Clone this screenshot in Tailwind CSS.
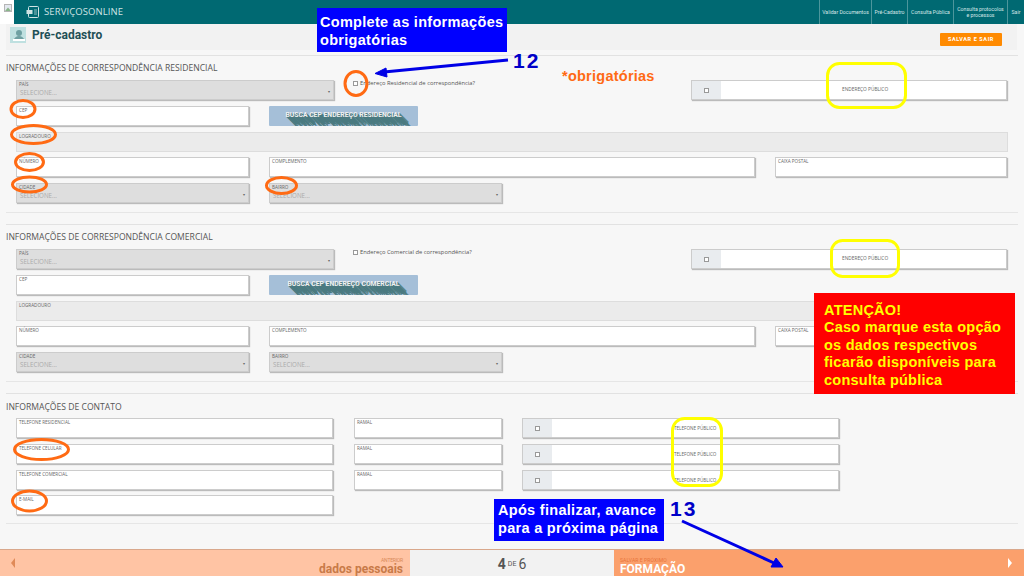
<!DOCTYPE html>
<html lang="pt">
<head>
<meta charset="utf-8">
<script src="https://cdn.jsdelivr.net/npm/@tailwindcss/browser@4"></script>
</head>
<body class="m-0">
<div class="relative w-[1024px] h-[576px] overflow-hidden bg-[#f7f7f7] font-['Open_Sans',sans-serif] text-[#555]">

  <!-- header -->
  <header class="flex h-[24px] bg-[#006972] text-[#cfe3e4]">
    <div class="w-[14px] bg-white flex items-start pt-[4px] pl-[4px]">
      <svg width="8" height="8" viewBox="0 0 8 8"><rect x="0.5" y="0.5" width="7" height="7" fill="#e4e8f0" stroke="#b5b5b5"/><path d="M1 7 L4 3.5 L7 7Z" fill="#8ab58a"/></svg>
    </div>
    <div class="flex items-center gap-[5px] pl-[12px] flex-1">
      <svg width="13" height="12" viewBox="0 0 13 12" fill="none" stroke="#cfe3e4" stroke-width="1"><rect x="2.5" y="0.5" width="10" height="11" rx="1"/><rect x="0.5" y="4" width="6" height="4" fill="#cfe3e4" stroke="none"/><path d="M8 4h3M8 6h3M8 8h3" stroke-width="0.7"/></svg>
      <span class="text-[9.5px] tracking-[0.1px]">SERVIÇOSONLINE</span>
    </div>
    <nav class="flex text-[5.2px] text-center leading-[6px] font-['Roboto',sans-serif] text-[#d4e6e7]">
      <a class="w-[52px] flex items-center justify-center border-l border-[#4d969c]">Validar Documentos</a>
      <a class="w-[36px] flex items-center justify-center border-l border-[#4d969c]">Pré-Cadastro</a>
      <a class="w-[46px] flex items-center justify-center border-l border-[#4d969c]">Consulta Pública</a>
      <a class="w-[54px] flex items-center justify-center border-l border-[#4d969c]">Consulta protocolos<br>e processos</a>
      <a class="w-[17px] flex items-center justify-center border-l border-[#4d969c]">Sair</a>
    </nav>
  </header>

  <!-- title band -->
  <div class="flex items-center justify-between w-[1011px] h-[26px] ml-[6px] pl-[4px] pr-[15px] bg-[#f2f2f2]">
    <div class="flex items-center gap-[6px] -mt-[4px]">
      <svg width="16" height="16" viewBox="0 0 16 16"><rect width="16" height="16" fill="#bfe0e0"/><circle cx="9" cy="6" r="3" fill="#6fa0a2"/><path d="M3 14 Q5 9 9 9 Q13 9 15 14Z" fill="#6fa0a2"/><rect x="3" y="12" width="12" height="2" fill="#fff"/></svg>
      <h1 class="text-[12px] font-bold text-[#1f4f56] font-['Roboto',sans-serif]">Pré-cadastro</h1>
    </div>
    <button class="w-[62px] h-[13px] mt-[4px] rounded-[1px] bg-[#ff8a00] text-white text-[5.5px] font-bold tracking-[0.6px] font-['Roboto',sans-serif]">SALVAR E SAIR</button>
  </div>

  <div class="h-[1px] bg-[#e2e2e2] mt-[5px] ml-[6px] mr-[6px]"></div>

  <!-- residencial -->
  <section class="pl-[16px] pr-[16px]">
    <h2 class="-ml-[10px] mt-[6px] h-[12px] text-[8.6px] leading-[12px] text-[#555]">INFORMAÇÕES DE CORRESPONDÊNCIA RESIDENCIAL</h2>

    <div class="flex mt-[6px] h-[20px]">
      <div class="relative w-[318px] bg-[#dedede] border border-[#ccc] shadow-[1px_1px_1px_#bbb] px-[2px]"><p class="text-[4.6px] leading-[6px] text-[#666]">PAÍS</p><p class="text-[6.2px] leading-[8px] mt-[2px] pl-[1px] text-[#aaa]">SELECIONE...</p><span class="absolute right-[3px] top-[8px] text-[4px] text-[#666]">▾</span></div>
      <label class="flex items-start gap-[2px] ml-[19px] w-[338px] text-[5.8px] leading-[7px] text-[#555]"><span class="block w-[5px] h-[5px] mt-[1px] bg-white border border-[#999]"></span>Endereço Residencial de correspondência?</label>
      <div class="relative flex w-[316px] bg-white border border-[#ccc] shadow-[1px_1px_1px_#bbb]"><div class="w-[29px] bg-[#e9ecef] flex items-center justify-center"><span class="block w-[5px] h-[5px] bg-white border border-[#999]"></span></div><span class="pl-[121px] self-center text-[4.8px] text-[#666]">ENDEREÇO PÚBLICO</span></div>
    </div>

    <div class="flex mt-[6px] h-[20px] gap-[20px]">
      <div class="w-[233px] bg-white border border-[#ccc] shadow-[1px_1px_1px_#bbb] px-[2px] text-[4.6px] leading-[6px] text-[#666]">CEP</div>
      <button class="w-[149px] overflow-hidden rounded-[1px] bg-[#a5bfd8] text-[#f0f0f0] text-[6.8px] leading-[18px] pb-[2px] font-bold [text-shadow:1px_1px_0_#4a7a80,2px_2px_0_#4a7a80,3px_3px_0_#4a7a80,4px_4px_0_#4a7a80,5px_5px_0_#4a7a80,6px_6px_0_#4a7a80,7px_7px_0_#4a7a80,8px_8px_0_#4a7a80,9px_9px_0_#4a7a80] font-['Roboto',sans-serif]">BUSCA CEP ENDEREÇO RESIDENCIAL</button>
    </div>

    <div class="mt-[6px] h-[20px] w-[992px] bg-[#ebebeb] border border-[#ddd] px-[2px] text-[4.6px] leading-[6px] text-[#666]">LOGRADOURO</div>

    <div class="flex mt-[5px] h-[20px] gap-[20px]">
      <div class="w-[233px] bg-white border border-[#ccc] shadow-[1px_1px_1px_#bbb] px-[2px] text-[4.6px] leading-[6px] text-[#666]">NÚMERO</div>
      <div class="w-[486px] bg-white border border-[#ccc] shadow-[1px_1px_1px_#bbb] px-[2px] text-[4.6px] leading-[6px] text-[#666]">COMPLEMENTO</div>
      <div class="w-[232px] bg-white border border-[#ccc] shadow-[1px_1px_1px_#bbb] px-[2px] text-[4.6px] leading-[6px] text-[#666]">CAIXA POSTAL</div>
    </div>

    <div class="flex mt-[6px] h-[20px] gap-[20px]">
      <div class="relative w-[233px] bg-[#dedede] border border-[#ccc] shadow-[1px_1px_1px_#bbb] px-[2px]"><p class="text-[4.6px] leading-[6px] text-[#666]">CIDADE</p><p class="text-[6.2px] leading-[8px] mt-[2px] pl-[1px] text-[#aaa]">SELECIONE...</p><span class="absolute right-[3px] top-[8px] text-[4px] text-[#666]">▾</span></div>
      <div class="relative w-[233px] bg-[#dedede] border border-[#ccc] shadow-[1px_1px_1px_#bbb] px-[2px]"><p class="text-[4.6px] leading-[6px] text-[#666]">BAIRRO</p><p class="text-[6.2px] leading-[8px] mt-[2px] pl-[1px] text-[#aaa]">SELECIONE...</p><span class="absolute right-[3px] top-[8px] text-[4px] text-[#666]">▾</span></div>
    </div>
  </section>

  <div class="h-[1px] bg-[#e6e6e6] mt-[9px] mx-[6px]"></div>
  <div class="h-[1px] bg-[#e2e2e2] mt-[11px] mx-[6px]"></div>

  <!-- comercial -->
  <section class="pl-[16px] pr-[16px]">
    <h2 class="-ml-[10px] mt-[6px] h-[12px] text-[8.6px] leading-[12px] text-[#555]">INFORMAÇÕES DE CORRESPONDÊNCIA COMERCIAL</h2>

    <div class="flex mt-[6px] h-[20px]">
      <div class="relative w-[318px] bg-[#dedede] border border-[#ccc] shadow-[1px_1px_1px_#bbb] px-[2px]"><p class="text-[4.6px] leading-[6px] text-[#666]">PAÍS</p><p class="text-[6.2px] leading-[8px] mt-[2px] pl-[1px] text-[#aaa]">SELECIONE...</p><span class="absolute right-[3px] top-[8px] text-[4px] text-[#666]">▾</span></div>
      <label class="flex items-start gap-[2px] ml-[19px] w-[338px] text-[5.8px] leading-[7px] text-[#555]"><span class="block w-[5px] h-[5px] mt-[1px] bg-white border border-[#999]"></span>Endereço Comercial de correspondência?</label>
      <div class="relative flex w-[316px] bg-white border border-[#ccc] shadow-[1px_1px_1px_#bbb]"><div class="w-[29px] bg-[#e9ecef] flex items-center justify-center"><span class="block w-[5px] h-[5px] bg-white border border-[#999]"></span></div><span class="pl-[121px] self-center text-[4.8px] text-[#666]">ENDEREÇO PÚBLICO</span></div>
    </div>

    <div class="flex mt-[6px] h-[20px] gap-[20px]">
      <div class="w-[233px] bg-white border border-[#ccc] shadow-[1px_1px_1px_#bbb] px-[2px] text-[4.6px] leading-[6px] text-[#666]">CEP</div>
      <button class="w-[149px] overflow-hidden rounded-[1px] bg-[#a5bfd8] text-[#f0f0f0] text-[6.8px] leading-[18px] pb-[2px] font-bold [text-shadow:1px_1px_0_#4a7a80,2px_2px_0_#4a7a80,3px_3px_0_#4a7a80,4px_4px_0_#4a7a80,5px_5px_0_#4a7a80,6px_6px_0_#4a7a80,7px_7px_0_#4a7a80,8px_8px_0_#4a7a80,9px_9px_0_#4a7a80] font-['Roboto',sans-serif]">BUSCA CEP ENDEREÇO COMERCIAL</button>
    </div>

    <div class="mt-[6px] h-[20px] w-[992px] bg-[#ebebeb] border border-[#ddd] px-[2px] text-[4.6px] leading-[6px] text-[#666]">LOGRADOURO</div>

    <div class="flex mt-[5px] h-[20px] gap-[20px]">
      <div class="w-[233px] bg-white border border-[#ccc] shadow-[1px_1px_1px_#bbb] px-[2px] text-[4.6px] leading-[6px] text-[#666]">NÚMERO</div>
      <div class="w-[486px] bg-white border border-[#ccc] shadow-[1px_1px_1px_#bbb] px-[2px] text-[4.6px] leading-[6px] text-[#666]">COMPLEMENTO</div>
      <div class="w-[232px] bg-white border border-[#ccc] shadow-[1px_1px_1px_#bbb] px-[2px] text-[4.6px] leading-[6px] text-[#666]">CAIXA POSTAL</div>
    </div>

    <div class="flex mt-[6px] h-[20px] gap-[20px]">
      <div class="relative w-[233px] bg-[#dedede] border border-[#ccc] shadow-[1px_1px_1px_#bbb] px-[2px]"><p class="text-[4.6px] leading-[6px] text-[#666]">CIDADE</p><p class="text-[6.2px] leading-[8px] mt-[2px] pl-[1px] text-[#aaa]">SELECIONE...</p><span class="absolute right-[3px] top-[8px] text-[4px] text-[#666]">▾</span></div>
      <div class="relative w-[233px] bg-[#dedede] border border-[#ccc] shadow-[1px_1px_1px_#bbb] px-[2px]"><p class="text-[4.6px] leading-[6px] text-[#666]">BAIRRO</p><p class="text-[6.2px] leading-[8px] mt-[2px] pl-[1px] text-[#aaa]">SELECIONE...</p><span class="absolute right-[3px] top-[8px] text-[4px] text-[#666]">▾</span></div>
    </div>
  </section>

  <div class="h-[1px] bg-[#e6e6e6] mt-[9px] mx-[6px]"></div>
  <div class="h-[1px] bg-[#e2e2e2] mt-[11px] mx-[6px]"></div>

  <!-- contato -->
  <section class="pl-[16px]">
    <h2 class="-ml-[10px] mt-[7px] h-[12px] text-[8.6px] leading-[12px] text-[#555]">INFORMAÇÕES DE CONTATO</h2>

    <div class="flex mt-[5px] h-[20px]">
      <div class="w-[317px] bg-white border border-[#ccc] shadow-[1px_1px_1px_#bbb] px-[2px] text-[4.6px] leading-[6px] text-[#666]">TELEFONE RESIDENCIAL</div>
      <div class="ml-[21px] w-[148px] bg-white border border-[#ccc] shadow-[1px_1px_1px_#bbb] px-[2px] text-[4.6px] leading-[6px] text-[#666]">RAMAL</div>
      <div class="flex ml-[20px] w-[317px] bg-white border border-[#ccc] shadow-[1px_1px_1px_#bbb]"><div class="w-[29px] bg-[#e9ecef] flex items-center justify-center"><span class="block w-[5px] h-[5px] bg-white border border-[#999]"></span></div><span class="pl-[122px] self-center text-[4.6px] text-[#666]">TELEFONE PÚBLICO</span></div>
    </div>
    <div class="flex mt-[6px] h-[20px]">
      <div class="w-[317px] bg-white border border-[#ccc] shadow-[1px_1px_1px_#bbb] px-[2px] text-[4.6px] leading-[6px] text-[#666]">TELEFONE CELULAR</div>
      <div class="ml-[21px] w-[148px] bg-white border border-[#ccc] shadow-[1px_1px_1px_#bbb] px-[2px] text-[4.6px] leading-[6px] text-[#666]">RAMAL</div>
      <div class="flex ml-[20px] w-[317px] bg-white border border-[#ccc] shadow-[1px_1px_1px_#bbb]"><div class="w-[29px] bg-[#e9ecef] flex items-center justify-center"><span class="block w-[5px] h-[5px] bg-white border border-[#999]"></span></div><span class="pl-[122px] self-center text-[4.6px] text-[#666]">TELEFONE PÚBLICO</span></div>
    </div>
    <div class="flex mt-[6px] h-[20px]">
      <div class="w-[317px] bg-white border border-[#ccc] shadow-[1px_1px_1px_#bbb] px-[2px] text-[4.6px] leading-[6px] text-[#666]">TELEFONE COMERCIAL</div>
      <div class="ml-[21px] w-[148px] bg-white border border-[#ccc] shadow-[1px_1px_1px_#bbb] px-[2px] text-[4.6px] leading-[6px] text-[#666]">RAMAL</div>
      <div class="flex ml-[20px] w-[317px] bg-white border border-[#ccc] shadow-[1px_1px_1px_#bbb]"><div class="w-[29px] bg-[#e9ecef] flex items-center justify-center"><span class="block w-[5px] h-[5px] bg-white border border-[#999]"></span></div><span class="pl-[122px] self-center text-[4.6px] text-[#666]">TELEFONE PÚBLICO</span></div>
    </div>
    <div class="mt-[5px] h-[20px] w-[317px] bg-white border border-[#ccc] shadow-[1px_1px_1px_#bbb] px-[2px] text-[4.6px] leading-[6px] text-[#666]">E-MAIL</div>
  </section>

  <div class="h-[1px] bg-[#e6e6e6] mt-[8px] mx-[6px]"></div>

  <!-- footer -->
  <footer class="absolute left-0 right-0 bottom-0 h-[27px] flex border-t border-[#d9a88c] font-['Roboto',sans-serif]">
    <div class="w-[410px] bg-[#ffc4a4] flex items-center justify-between pl-[11px] pr-[7px]">
      <span class="w-0 h-0 border-y-[5px] border-y-transparent border-r-[4px] border-r-[#e08a58]"></span>
      <div class="text-right pt-[5px]"><p class="text-[5px] leading-[6px] tracking-[-0.2px] text-[#d98a5a]">ANTERIOR</p><p class="text-[12px] leading-[12px] font-bold text-[#c87a48]">dados pessoais</p></div>
    </div>
    <div class="w-[204px] bg-[#f2f2f2] flex items-center justify-center gap-[2px] text-[#555] pt-[3px]"><b class="text-[14px]">4</b><span class="text-[7px]">DE</span><b class="text-[14px] font-normal">6</b></div>
    <div class="flex-1 bg-[#fba06c] flex items-center justify-between pl-[6px] pr-[12px]">
      <div class="pt-[5px]"><p class="text-[5px] leading-[6px] tracking-[0.1px] text-[#e8743a]">SALVAR E PRÓXIMO</p><p class="text-[12px] leading-[12px] font-bold text-white">FORMAÇÃO</p></div>
      <span class="w-0 h-0 border-y-[5px] border-y-transparent border-l-[4px] border-l-white"></span>
    </div>
  </footer>

  <!-- annotations -->
  <div class="absolute left-[317px] top-[8px] w-[190px] h-[44px] bg-[#0000ff] text-white font-['Liberation_Sans',sans-serif] font-bold text-[14.5px] leading-[17.5px] px-[3px] pt-[6px] tracking-[0.3px]">Complete as informações<br>obrigatórias</div>
  <div class="absolute left-[513px] top-[51px] text-[#0000c8] font-['Liberation_Sans',sans-serif] font-bold text-[21px] leading-[20px] tracking-[2px]">12</div>
  <div class="absolute left-[562px] top-[68px] text-[#ff6a13] font-['Liberation_Sans',sans-serif] font-bold text-[14.5px] leading-[17px] tracking-[0.25px]">*obrigatórias</div>
  <div class="absolute left-[814px] top-[293px] w-[201px] h-[101px] bg-[#ff0000] text-[#ffff00] font-['Liberation_Sans',sans-serif] font-bold text-[14.5px] leading-[17.4px] pl-[10px] pt-[9px] tracking-[0.25px]">ATENÇÃO!<br>Caso marque esta opção<br>os dados respectivos<br>ficarão disponíveis para<br>consulta pública</div>
  <div class="absolute left-[494px] top-[499px] w-[170px] h-[42px] bg-[#0000ff] text-white font-['Liberation_Sans',sans-serif] font-bold text-[14.5px] leading-[18px] pl-[4px] pt-[2px] tracking-[0.3px]">Após finalizar, avance<br>para a próxima página</div>
  <div class="absolute left-[670px] top-[499px] text-[#0000c8] font-['Liberation_Sans',sans-serif] font-bold text-[21px] leading-[20px] tracking-[2px]">13</div>

  <svg class="absolute left-0 top-0" width="1024" height="576" viewBox="0 0 1024 576" fill="none">
    <g stroke="#ff6a13" stroke-width="3">
      <ellipse cx="356" cy="83.5" rx="11" ry="12"/>
      <ellipse cx="23" cy="109" rx="12" ry="8.5"/>
      <ellipse cx="33.5" cy="134.5" rx="22" ry="9"/>
      <ellipse cx="29.5" cy="162" rx="14" ry="8.5"/>
      <ellipse cx="29.5" cy="184.5" rx="17" ry="7.5"/>
      <ellipse cx="281.5" cy="185.5" rx="15" ry="8"/>
      <ellipse cx="41.5" cy="449.5" rx="27" ry="10"/>
      <ellipse cx="29.5" cy="501" rx="17" ry="10"/>
    </g>
    <g stroke="#ffff00" stroke-width="3">
      <rect x="827.5" y="63.5" width="78" height="44" rx="12"/>
      <rect x="831.5" y="240.5" width="67" height="36" rx="11"/>
      <rect x="672.5" y="418.5" width="49" height="67" rx="12"/>
    </g>
    <g stroke="#0000e6" stroke-width="3" fill="#0000e6">
      <path d="M508 60 L384 72"/>
      <path d="M375 73.5 L386 68 L387 77Z" stroke-width="1"/>
      <path d="M682 521 L774 563"/>
      <path d="M783 567 L771 567 L776 558Z" stroke-width="1"/>
    </g>
  </svg>
</div>
</body>
</html>
